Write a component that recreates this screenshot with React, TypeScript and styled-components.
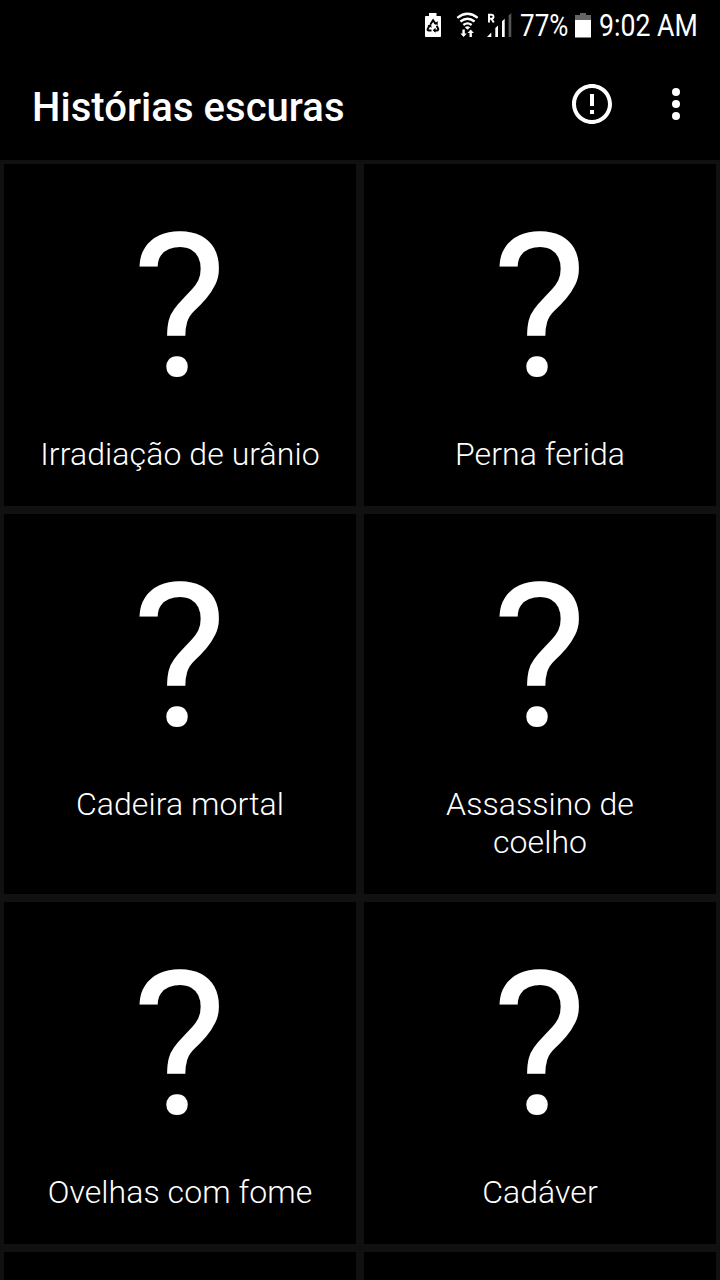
import styled, { createGlobalStyle } from "styled-components";

const stories: string[] = [
  "Irradiação de urânio",
  "Perna ferida",
  "Cadeira mortal",
  "Assassino de coelho",
  "Ovelhas com fome",
  "Cadáver",
];

const StatusIcons = () => (
  <IconStrip width="98" height="32" viewBox="0 0 98 32">
    {/* battery saver */}
    <path fill="#fff" d="M8 5h7.500v3h3.700q.8 0 .8.8V28.200q0 .8-.8.8H4.800q-.8 0-.8-.8V8.800q0-.8.8-.8H8z" />
    <g fill="none" stroke="#000" strokeWidth="2">
      <path d="M9.500 16.200l2.600-4 2.800 4" />
      <path d="M8.500 17.500L6.700 21q-.4 1.500 1 1.500H10.500" />
      <path d="M15.700 17.800l1.500 2.900q.2 1.800-1.200 1.800H13" />
    </g>
    <path fill="#000" d="M12.800 15.600l3.800 1.500.2-3.800zM6.500 17.600l3.500-1.500.7 3.700zM14.500 19.800v5l-2.800-2.500z" />
    {/* wifi */}
    <g fill="none" stroke="#fff" strokeWidth="2.300">
      <path d="M36.300 9.800q10.200-8 20.400 0" />
      <path d="M39.400 13.500q7.100-5.600 14.200 0" />
      <path d="M42.400 17q4.100-3.300 8.200 0" />
    </g>
    <path fill="#fff" d="M43.800 19.200q2.700-2 5.400 0L46.500 21.800z" />
    <path fill="#fff" d="M41.400 21.500h2.400v4h2l-3.200 3.500-3.200-3.500h2zM48.500 29v-4h-2l3.200-3.500 3.200 3.500h-2v4z" />
    {/* roaming signal */}
    <path
      fill="none"
      stroke="#fff"
      strokeWidth="1.900"
      d="M68 14.500V6.700h2.300q2.200 0 2.200 2t-2.200 2h-2.300M70.400 10.700l2.400 3.800"
    />
    <path fill="#fff" d="M66 29l4.300-4.500V29zM74.300 20l2.700-2.500V29h-2.700zM81 13.200l2.700-2.500V29H81z" />
    <path fill="#555" d="M87.600 7.500l2.700-2.500V29h-2.700z" />
  </IconStrip>
);

const BatteryIcon = () => (
  <BatterySvg width="16" height="25" viewBox="0 0 16 25">
    <path fill="#666" d="M5 0h6v2h5v6H0V2h5z" />
    <path fill="#fff" d="M0 7h16v17.500H0z" />
  </BatterySvg>
);

const InfoIcon = () => (
  <svg width="48" height="48" viewBox="0 0 24 24" fill="#fff">
    <path d="M11 15h2v2h-2zm0-8h2v6h-2zm.99-5C6.470 2 2 6.480 2 12s4.470 10 9.990 10C17.520 22 22 17.520 22 12S17.520 2 11.990 2zM12 20c-4.420 0-8-3.580-8-8s3.580-8 8-8 8 3.580 8 8-3.580 8-8 8z" />
  </svg>
);

const MoreIcon = () => (
  <svg width="48" height="48" viewBox="0 0 24 24" fill="#fff">
    <circle cx="12" cy="6" r="2" />
    <circle cx="12" cy="12" r="2" />
    <circle cx="12" cy="18" r="2" />
  </svg>
);

const App = () => {
  return (
    <Screen>
      <GlobalStyle />
      <StatusBar>
        <StatusIcons />
        <StatusSlot $width={49}>
          <StatusText $scale={0.84}>77%</StatusText>
        </StatusSlot>
        <BatteryIcon />
        <StatusSlot $width={98}>
          <StatusText $scale={0.86}>9:02 AM</StatusText>
        </StatusSlot>
      </StatusBar>
      <AppBar>
        <Title>Histórias escuras</Title>
        <IconButton aria-label="Info">
          <InfoIcon />
        </IconButton>
        <IconButton aria-label="Menu">
          <MoreIcon />
        </IconButton>
      </AppBar>
      <Grid>
        {stories.map((story) => (
          <Card key={story}>
            <Mark>?</Mark>
            <Label>{story}</Label>
          </Card>
        ))}
        <EmptyCard />
        <EmptyCard />
      </Grid>
    </Screen>
  );
};

export default App;

const GlobalStyle = createGlobalStyle`
  * {
    box-sizing: border-box;
  }
  body {
    margin: 0;
    background-color: #000;
    overflow: hidden;
  }
`;

const Screen = styled.div`
  width: 720px;
  height: 1280px;
  display: flex;
  flex-direction: column;
  overflow: hidden;
  background-color: #000;
  color: #fff;
  font-family: Roboto, sans-serif;
`;

const StatusBar = styled.div`
  flex: none;
  height: 48px;
  padding-right: 23px;
  display: flex;
  align-items: flex-start;
  justify-content: flex-end;
`;

const IconStrip = styled.svg`
  flex: none;
  margin: 8px 1px 0 0;
`;

const BatterySvg = styled.svg`
  flex: none;
  margin: 13px 8px 0 6px;
`;

const StatusSlot = styled.div<{ $width: number }>`
  flex: none;
  width: ${({ $width }) => $width}px;
  padding-top: 8px;
`;

const StatusText = styled.span<{ $scale: number }>`
  display: block;
  width: max-content;
  font-size: 31px;
  line-height: 35px;
  transform: scaleX(${({ $scale }) => $scale});
  transform-origin: left center;
`;

const AppBar = styled.header`
  flex: none;
  height: 112px;
  padding: 0 20px 0 32px;
  display: flex;
  align-items: center;
`;

const Title = styled.h1`
  flex: 1;
  margin: 0;
  padding-top: 6px;
  font-size: 40px;
  font-weight: 500;
  line-height: 47px;
  letter-spacing: 0.04px;
`;

const IconButton = styled.button`
  width: 48px;
  height: 48px;
  margin-left: 36px;
  padding: 0;
  border: none;
  background: none;
`;

const Grid = styled.main`
  flex: none;
  padding: 4px;
  display: grid;
  grid-template-columns: 1fr 1fr;
  gap: 8px;
  background-color: #111;
`;

const Card = styled.div`
  padding: 26px 32px 33px;
  display: flex;
  flex-direction: column;
  align-items: center;
  gap: 10px;
  background-color: #000;
`;

const EmptyCard = styled(Card)`
  min-height: 342px;
`;

const Mark = styled.div`
  padding-right: 1px;
  font-size: 200px;
  line-height: 235px;
`;

const Label = styled.div`
  font-size: 32px;
  font-weight: 300;
  line-height: 38px;
  letter-spacing: 0.08px;
  text-align: center;
`;
